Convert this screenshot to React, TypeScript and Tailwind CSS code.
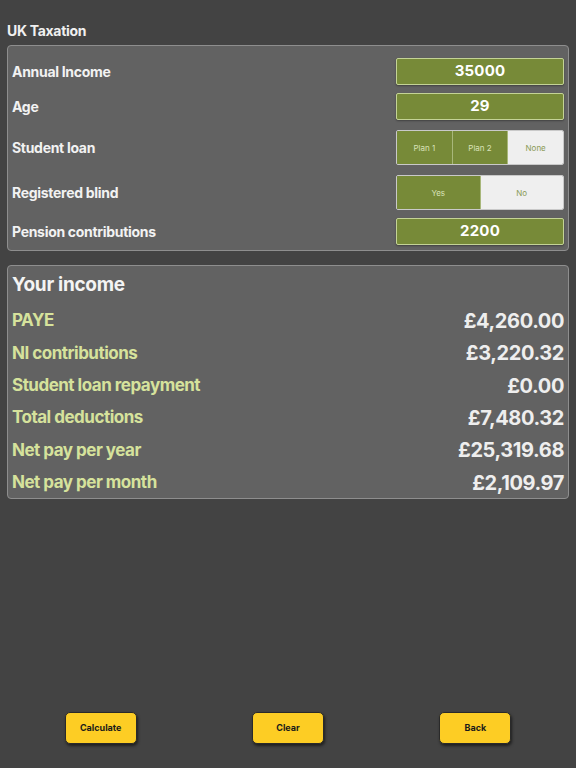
import React, { useState } from "react";

const font = { fontFamily: "Inter, 'Liberation Sans', sans-serif" };

const Field: React.FC<{ value: string }> = ({ value }) => (
  <div className="w-[168px] h-[27px] bg-[#778a38] border border-[#c4d396] rounded-[2px] shadow-[0_1px_2px_rgba(0,0,0,0.35)] flex items-center justify-center text-white text-[15px] font-bold tracking-[0.2px]">
    {value}
  </div>
);

const Segmented: React.FC<{ options: string[]; selected: number }> = ({ options, selected }) => (
  <div className="w-[168px] h-[35px] flex border border-[#c9c9c9] rounded-[2px] overflow-hidden">
    {options.map((opt, i) => (
      <div
        key={opt}
        className={
          "flex-1 flex items-center justify-center text-[8px] " +
          (i <= selected ? "bg-[#778a38] text-[#d9e2b8] " : "bg-[#efefef] text-[#8a9a55] ") +
          (i > 0 ? "border-l border-[#a8b77a]" : "")
        }
      >
        {opt}
      </div>
    ))}
  </div>
);

const Row: React.FC<{ label: string; children: React.ReactNode; className?: string }> = ({ label, children, className }) => (
  <div className={"flex items-center justify-between " + (className || "")}>
    <span className="text-[14px] font-bold tracking-[-0.3px] text-[#f2f2f2]">{label}</span>
    {children}
  </div>
);

export default function App() {
  const [results] = useState([
    { label: "PAYE", value: "£4,260.00" },
    { label: "NI contributions", value: "£3,220.32" },
    { label: "Student loan repayment", value: "£0.00" },
    { label: "Total deductions", value: "£7,480.32" },
    { label: "Net pay per year", value: "£25,319.68" },
    { label: "Net pay per month", value: "£2,109.97" },
  ]);

  return (
    <div className="w-full h-[768px] bg-[#434343] px-[7px] flex flex-col" style={font}>
      <div className="h-[45px] flex items-end pb-[4px]">
        <span className="text-[14px] font-bold tracking-[-0.3px] text-[#f0f0f0]">UK Taxation</span>
      </div>

      <div className="h-[206px] bg-[#626262] border border-[#8e8e8e] rounded-[4px] pl-[4px] pr-[4px] pt-[12px]">
        <Row label="Annual Income">
          <Field value="35000" />
        </Row>
        <Row label="Age" className="mt-[8px]">
          <Field value="29" />
        </Row>
        <Row label="Student loan" className="mt-[10px]">
          <Segmented options={["Plan 1", "Plan 2", "None"]} selected={1} />
        </Row>
        <Row label="Registered blind" className="mt-[10px]">
          <Segmented options={["Yes", "No"]} selected={0} />
        </Row>
        <Row label="Pension contributions" className="mt-[8px]">
          <Field value="2200" />
        </Row>
      </div>

      <div className="mt-[14px] h-[234px] bg-[#626262] border border-[#8e8e8e] rounded-[4px] pl-[4px] pr-[4px] pt-[6px]">
        <div className="h-[27px] flex items-center text-[19px] font-bold tracking-[-0.3px] text-[#f4f4f4]">Your income</div>
        <div className="mt-[6px] flex flex-col">
          {results.map((r) => (
            <div key={r.label} className="h-[32.3px] flex items-center justify-between">
              <span className="text-[17px] font-bold tracking-[-0.5px] text-[#d6e29c]">{r.label}</span>
              <span className="text-[20px] font-bold tracking-[-0.4px] text-[#eeeeee]">{r.value}</span>
            </div>
          ))}
        </div>
      </div>

      <div className="flex-1" />

      <div className="grid grid-cols-3 mb-[24px]">
        {["Calculate", "Clear", "Back"].map((b) => (
          <div key={b} className="flex justify-center">
            <button className="w-[72px] h-[32px] bg-[#fdcd24] border border-[#2a2a2a] rounded-[5px] shadow-[1px_2px_3px_rgba(0,0,0,0.55)] text-[9px] font-bold text-[#1a1a1a]">
              {b}
            </button>
          </div>
        ))}
      </div>
    </div>
  );
}
